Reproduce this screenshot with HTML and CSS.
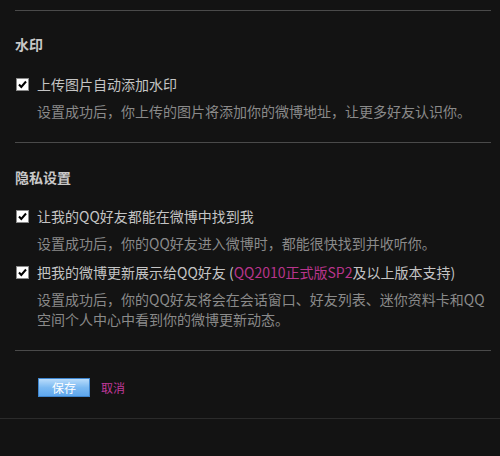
FILE: index.html
```html
<!DOCTYPE html>
<html lang="zh-CN">
<head>
<meta charset="utf-8">
<title>设置</title>
<link rel="stylesheet" href="styles.css">
</head>
<body>
<div class="page">
  <div class="panel">
    <section class="group group-first">
      <h2 class="group-title">水印</h2>
      <ul class="options">
        <li class="option">
          <label class="option-label">
            <span class="check"><svg width="13" height="13" viewBox="0 0 13 13"><rect x="0.5" y="0.5" width="12" height="12" fill="#fff" stroke="#8a8a8a"/><polyline points="3,6.5 5.3,9 10,3.5" fill="none" stroke="#000" stroke-width="2"/></svg></span>
            上传图片自动添加水印
          </label>
          <p class="option-desc">设置成功后，你上传的图片将添加你的微博地址，让更多好友认识你。</p>
        </li>
      </ul>
    </section>
    <section class="group group-second">
      <h2 class="group-title">隐私设置</h2>
      <ul class="options">
        <li class="option">
          <label class="option-label">
            <span class="check"><svg width="13" height="13" viewBox="0 0 13 13"><rect x="0.5" y="0.5" width="12" height="12" fill="#fff" stroke="#8a8a8a"/><polyline points="3,6.5 5.3,9 10,3.5" fill="none" stroke="#000" stroke-width="2"/></svg></span>
            让我的QQ好友都能在微博中找到我
          </label>
          <p class="option-desc">设置成功后，你的QQ好友进入微博时，都能很快找到并收听你。</p>
        </li>
        <li class="option">
          <label class="option-label">
            <span class="check"><svg width="13" height="13" viewBox="0 0 13 13"><rect x="0.5" y="0.5" width="12" height="12" fill="#fff" stroke="#8a8a8a"/><polyline points="3,6.5 5.3,9 10,3.5" fill="none" stroke="#000" stroke-width="2"/></svg></span>
            <span>把我的微博更新展示给QQ好友 (<span class="hl">QQ2010正式版SP2</span>及以上版本支持)</span>
          </label>
          <p class="option-desc">设置成功后，你的QQ好友将会在会话窗口、好友列表、迷你资料卡和QQ空间个人中心中看到你的微博更新动态。</p>
        </li>
      </ul>
    </section>
    <div class="actions">
      <button class="btn-save" type="button">保存</button>
      <a class="link-cancel" href="#">取消</a>
    </div>
  </div>
  <div class="footer-rule"></div>
</div>
</body>
</html>
```

FILE: styles.css
```css
html, body {
  margin: 0;
  padding: 0;
  background: #131313;
}
body {
  font-family: "Noto Sans CJK SC", "Liberation Sans", sans-serif;
  font-size: 14px;
  color: #c4c4c4;
}
.page {
  min-height: 456px;
  display: flex;
  flex-direction: column;
}
.panel {
  margin: 0 9px 0 15px;
  padding-top: 10px;
}
.group {
  border-top: 1px solid #4a4a4a;
  padding-bottom: 21px;
}
.group-title {
  margin: 23px 0 0;
  font-size: 14px;
  line-height: 20px;
  font-weight: bold;
  color: #c8c8c8;
}
.group-second .group-title {
  margin-top: 24px;
}
.options {
  list-style: none;
  margin: 20px 0 0;
  padding: 0;
}
.group-second .options {
  margin-top: 19px;
}
.option + .option {
  margin-top: 9px;
}
.option-label {
  display: flex;
  align-items: center;
  gap: 8px;
  padding-left: 1px;
  line-height: 20px;
  color: #c4c4c4;
  white-space: nowrap;
}
.check {
  display: flex;
  width: 13px;
  height: 13px;
}
.hl {
  color: #b8358c;
}
.option-desc {
  margin: 7px 0 0;
  padding-left: 22px;
  line-height: 20px;
  color: #8a8a8a;
}
.actions {
  border-top: 1px solid #4a4a4a;
  padding: 27px 0 21px 23px;
  display: flex;
  align-items: center;
  gap: 11px;
}
.btn-save {
  width: 52px;
  height: 19px;
  padding: 0;
  border: 1px solid #3f86cf;
  background: linear-gradient(#b9dcfb, #7cbaf2 50%, #5ea7ee);
  color: #fff;
  font-family: "Noto Sans CJK SC", sans-serif;
  font-size: 12px;
  line-height: 17px;
}
.link-cancel {
  color: #c0399a;
  font-size: 12px;
  line-height: 19px;
  text-decoration: none;
}
.footer-rule {
  border-top: 1px solid #2b2b2b;
  flex: 1;
}
```
